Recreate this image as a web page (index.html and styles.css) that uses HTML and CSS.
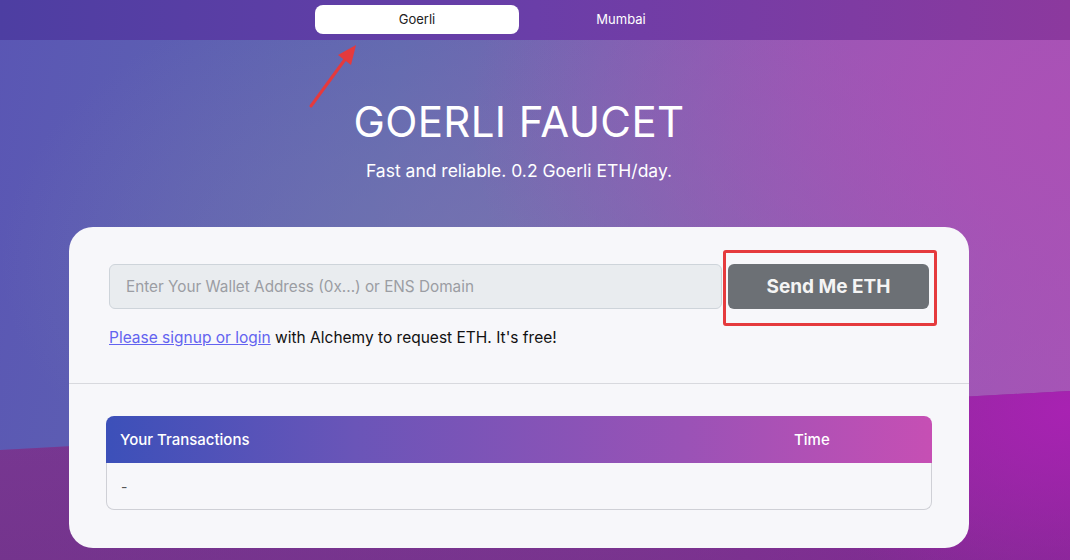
FILE: index.html
```html
<!DOCTYPE html>
<html lang="en">
  <head>
    <meta charset="UTF-8" />
    <meta name="viewport" content="width=device-width, initial-scale=1.0" />
    <title>Goerli Faucet</title>
    <link rel="stylesheet" href="styles.css">
  </head>
  <body class="body">
    <div class="backdrop"></div>
    <nav class="nav">
      <div class="nav-inner">
        <a class="tab active" href="#">Goerli</a>
        <a class="tab" href="#">Mumbai</a>
      </div>
    </nav>
    <svg class="arrow" width="60" height="70" viewBox="0 0 60 70">
      <line x1="6" y1="65" x2="44" y2="13" stroke="#e53a3d" stroke-width="3" stroke-linecap="round"/>
      <polygon points="51,4 33,14 46,24" fill="#e53a3d"/>
    </svg>
    <main class="page">
      <h1 class="title">GOERLI FAUCET</h1>
      <p class="subtitle">Fast and reliable. 0.2 Goerli ETH/day.</p>
      <div class="card">
        <form class="request">
          <div class="row">
            <input type="text" class="address" placeholder="Enter Your Wallet Address (0x...) or ENS Domain">
            <div class="btn-wrap">
              <button type="button" class="send">Send Me ETH</button>
              <span class="highlight"></span>
            </div>
          </div>
          <p class="note"><a href="#">Please signup or login</a> with Alchemy to request ETH. It's free!</p>
        </form>
        <div class="history">
          <div class="table">
            <div class="thead">
              <span>Your Transactions</span>
              <span>Time</span>
            </div>
            <div class="tbody">
              <span class="empty">-</span>
            </div>
          </div>
        </div>
      </div>
    </main>
  </body>
</html>
```
FILE: styles.css
```css
.body {
  margin: 0;
  height: 560px;
  overflow: hidden;
  font-family: "Inter", "Noto Sans", sans-serif;
  position: relative;
  background:
    radial-gradient(ellipse 600px 400px at 1070px 120px, rgba(172, 80, 182, 0.9), rgba(172, 80, 182, 0) 100%),
    radial-gradient(ellipse 500px 300px at 500px 260px, rgba(118, 118, 176, 0.8), rgba(118, 118, 176, 0) 100%),
    linear-gradient(100deg, #5a56b4 0%, #6068b0 35%, #8d5cb4 70%, #a555b6 100%);
}
.backdrop {
  position: absolute;
  left: 0;
  top: 0;
  width: 1070px;
  height: 560px;
  clip-path: polygon(0 450px, 1070px 391px, 1070px 560px, 0 560px);
  background:
    radial-gradient(ellipse 300px 200px at 1070px 410px, rgba(168, 34, 178, 1), rgba(168, 34, 178, 0) 100%),
    linear-gradient(180deg, rgba(0, 0, 0, 0) 0%, rgba(90, 30, 110, 0.35) 100%),
    linear-gradient(90deg, #82409e 0%, #8a3fa0 60%, #9a2ea8 100%);
}
.nav {
  position: relative;
  height: 40px;
  background: linear-gradient(90deg, #4d3ea2 0%, #6a3ea8 50%, #8c399e 100%);
}
.nav-inner {
  width: 1038px;
  display: flex;
  justify-content: center;
  padding-top: 5px;
}
.tab {
  width: 204px;
  height: 29px;
  line-height: 29px;
  text-align: center;
  border-radius: 8px;
  color: #fff;
  font-size: 13px;
  text-decoration: none;
}
.tab.active {
  background-color: #fff;
  color: #222;
}
.arrow {
  position: absolute;
  left: 305px;
  top: 41px;
}
.page {
  position: relative;
  width: 1038px;
  text-align: center;
  color: #fff;
}
.title {
  margin: 57px 0 0;
  font-size: 42px;
  line-height: 50px;
  font-weight: 400;
  letter-spacing: 0.4px;
}
.subtitle {
  margin: 12px 0 0;
  font-size: 17.5px;
  line-height: 24px;
}
.card {
  width: 900px;
  margin: 44px auto 0;
  background-color: #f7f7fa;
  border-radius: 24px;
  color: #111;
  text-align: left;
}
.request {
  padding: 37px 40px 0;
  height: 119px;
  border-bottom: 1px solid #d8d9de;
}
.row {
  display: flex;
  gap: 6px;
}
.address {
  width: 613px;
  height: 45px;
  box-sizing: border-box;
  background-color: #e9ecef;
  border: 1px solid #ced4da;
  border-radius: 6px;
  padding: 0 16px;
  font-family: inherit;
  font-size: 15.3px;
}
.address::placeholder {
  color: #9b9da3;
}
.btn-wrap {
  position: relative;
}
.send {
  width: 201px;
  height: 45px;
  border: none;
  border-radius: 6px;
  background-color: #6c7075;
  color: #f4f4f4;
  font-family: inherit;
  font-size: 19px;
  font-weight: 700;
}
.highlight {
  position: absolute;
  left: -5px;
  top: -14px;
  width: 208px;
  height: 70px;
  border: 3px solid #e53a3d;
  border-radius: 3px;
}
.note {
  margin: 18px 0 0;
  font-size: 15.5px;
  line-height: 22px;
}
.note a {
  color: #6363f0;
}
.history {
  padding: 32px 37px 38px;
}
.thead {
  display: grid;
  grid-template-columns: 674px 1fr;
  height: 47px;
  align-items: center;
  padding: 0 14px;
  border-radius: 8px 8px 0 0;
  background: linear-gradient(90deg, #3c50b9 0%, #6a55b8 30%, #9a52b6 70%, #c64fb4 100%);
  color: #fff;
  font-size: 15px;
  font-weight: 500;
}
.tbody {
  height: 46px;
  line-height: 46px;
  padding: 0 14px;
  border: 1px solid #cfd0d6;
  border-top: none;
  border-radius: 0 0 8px 8px;
}
.empty {
  color: #555;
  font-size: 14px;
}
```
